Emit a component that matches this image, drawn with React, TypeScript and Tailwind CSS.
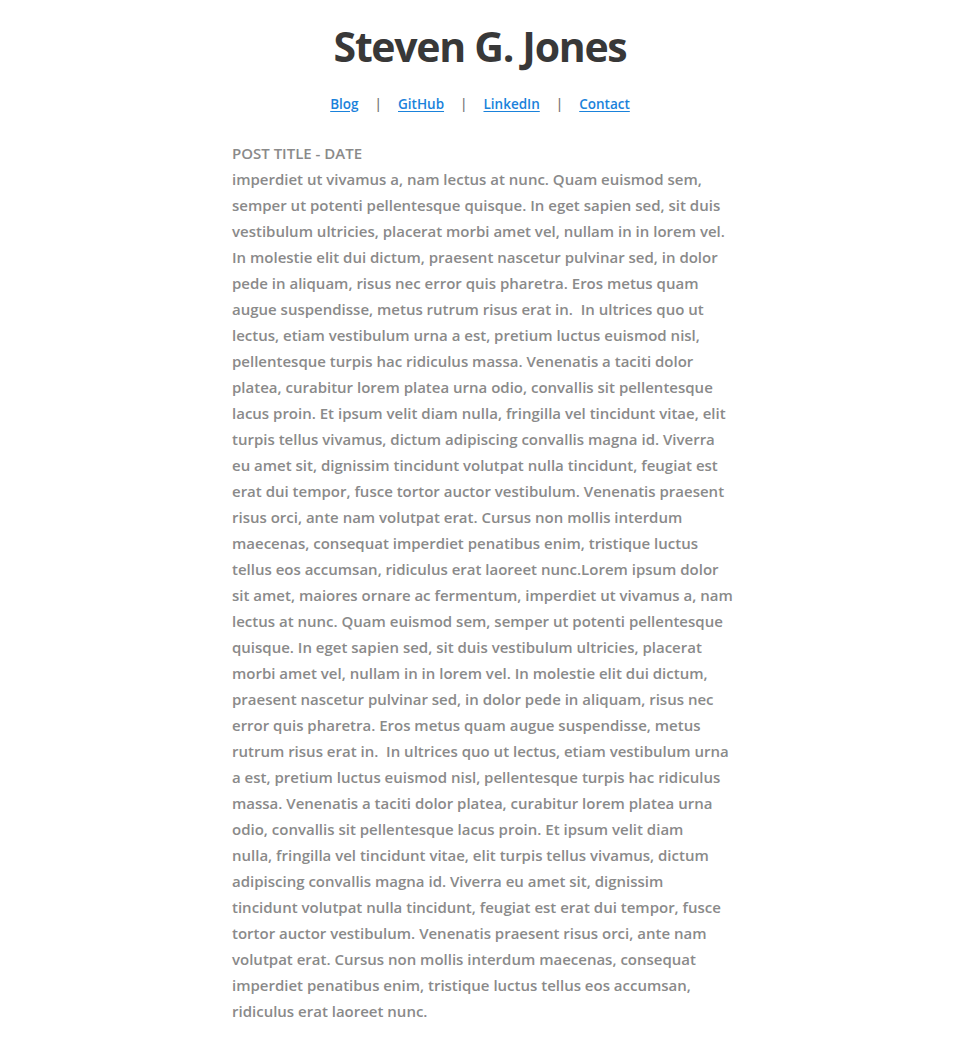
const lines = [
  'imperdiet ut vivamus a, nam lectus at nunc. Quam euismod sem,',
  'semper ut potenti pellentesque quisque. In eget sapien sed, sit duis',
  'vestibulum ultricies, placerat morbi amet vel, nullam in in lorem vel.',
  'In molestie elit dui dictum, praesent nascetur pulvinar sed, in dolor',
  'pede in aliquam, risus nec error quis pharetra. Eros metus quam',
  'augue suspendisse, metus rutrum risus erat in.  In ultrices quo ut',
  'lectus, etiam vestibulum urna a est, pretium luctus euismod nisl,',
  'pellentesque turpis hac ridiculus massa. Venenatis a taciti dolor',
  'platea, curabitur lorem platea urna odio, convallis sit pellentesque',
  'lacus proin. Et ipsum velit diam nulla, fringilla vel tincidunt vitae, elit',
  'turpis tellus vivamus, dictum adipiscing convallis magna id. Viverra',
  'eu amet sit, dignissim tincidunt volutpat nulla tincidunt, feugiat est',
  'erat dui tempor, fusce tortor auctor vestibulum. Venenatis praesent',
  'risus orci, ante nam volutpat erat. Cursus non mollis interdum',
  'maecenas, consequat imperdiet penatibus enim, tristique luctus',
  'tellus eos accumsan, ridiculus erat laoreet nunc.Lorem ipsum dolor',
  'sit amet, maiores ornare ac fermentum, imperdiet ut vivamus a, nam',
  'lectus at nunc. Quam euismod sem, semper ut potenti pellentesque',
  'quisque. In eget sapien sed, sit duis vestibulum ultricies, placerat',
  'morbi amet vel, nullam in in lorem vel. In molestie elit dui dictum,',
  'praesent nascetur pulvinar sed, in dolor pede in aliquam, risus nec',
  'error quis pharetra. Eros metus quam augue suspendisse, metus',
  'rutrum risus erat in.  In ultrices quo ut lectus, etiam vestibulum urna',
  'a est, pretium luctus euismod nisl, pellentesque turpis hac ridiculus',
  'massa. Venenatis a taciti dolor platea, curabitur lorem platea urna',
  'odio, convallis sit pellentesque lacus proin. Et ipsum velit diam',
  'nulla, fringilla vel tincidunt vitae, elit turpis tellus vivamus, dictum',
  'adipiscing convallis magna id. Viverra eu amet sit, dignissim',
  'tincidunt volutpat nulla tincidunt, feugiat est erat dui tempor, fusce',
  'tortor auctor vestibulum. Venenatis praesent risus orci, ante nam',
  'volutpat erat. Cursus non mollis interdum maecenas, consequat',
  'imperdiet penatibus enim, tristique luctus tellus eos accumsan,',
  'ridiculus erat laoreet nunc.',
]

const links = ['Blog', 'GitHub', 'LinkedIn', 'Contact']

export default function App() {
  return (
    <main className="min-h-screen bg-white font-['Open_Sans',sans-serif]">
      <header className="flex flex-col items-center pt-[18px]">
        <h1 className="text-[41px] leading-[56px] font-bold text-[#383838] tracking-[-1.3px]">Steven G. Jones</h1>
        <nav className="mt-[20px] flex items-center text-[13.5px] font-semibold">
          {links.map((l, i) => (
            <div key={l} className="flex items-center">
              {i > 0 && <span className="px-[16px] text-[#777]">|</span>}
              <a href="#" className="text-[#1a82db] underline underline-offset-2">{l}</a>
            </div>
          ))}
        </nav>
      </header>
      <article className="mx-auto mt-[26px] w-[500px] pl-[2px] text-[15px] leading-[26px] font-semibold text-[#8a8a8a]">
        <h2>POST TITLE - DATE</h2>
        <p>
          {lines.map((line, i) => (
            <span key={i} className="block whitespace-pre">{line}</span>
          ))}
        </p>
      </article>
    </main>
  )
}
